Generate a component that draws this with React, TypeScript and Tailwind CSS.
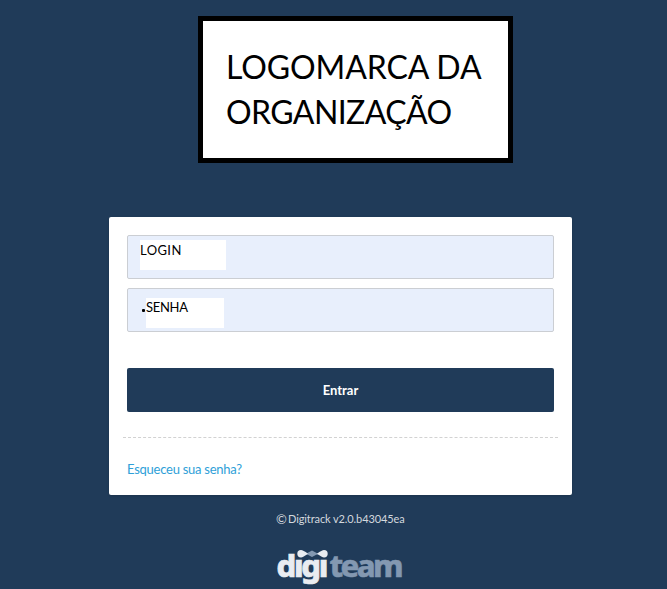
import React, { useState } from 'react';

function DigiteamLogo() {
  return (
    <svg width="160" height="47" viewBox="0 0 160 47" className="block" role="img" aria-label="digiteam">
      <text
        x="0.5"
        y="34.5"
        fontFamily='"Noto Sans", sans-serif'
        fontSize="31"
        textLength="52"
        lengthAdjust="spacing"
        fontWeight="800"
        stroke="#e9ecf1"
        strokeWidth="0.7"
        fill="#e9ecf1"
      >
        dıgı
      </text>
      <text
        x="53.5"
        y="34.5"
        fontFamily='"Noto Sans", sans-serif'
        fontSize="31"
        textLength="74"
        lengthAdjust="spacing"
        fontWeight="800"
        stroke="#8398b1"
        strokeWidth="0.5"
        fill="#8398b1"
      >
        team
      </text>
      {/* Linked dots over the two i letters */}
      <path d="M27 11.7 Q32 11.5 36 8.5 Q40 11.5 45 11.7 Q40 12 36 15 Q32 12 27 11.7 Z" fill="#8398b1" />
      <path d="M25 8 Q27 8 32 11.7 Q27 15.4 25 15.4 A3.7 3.7 0 0 1 25 8 Z" fill="#e9ecf1" />
      <path d="M48 8 Q46 8 41 11.7 Q46 15.4 48 15.4 A3.7 3.7 0 0 0 48 8 Z" fill="#e9ecf1" />
    </svg>
  );
}

export default function App() {
  const [isLoading, setIsLoading] = useState(false);

  // Handle form submit
  const handleSubmit = (e: React.FormEvent) => {
    e.preventDefault();
    setIsLoading(true);
    setTimeout(() => setIsLoading(false), 1000);
  };

  return (
    <div className="h-[589px] w-[667px] overflow-hidden bg-[#203b59] pt-4 font-['Lato',sans-serif]">
      {/* Organization logo */}
      <div className="ml-[198px] h-[147px] w-[315px] border-5 border-black bg-white pl-[23px] pt-[23px] text-[32px] leading-[45px] text-black">
        <div className="whitespace-nowrap tracking-[-0.1px]">LOGOMARCA DA</div>
        <div className="whitespace-nowrap tracking-[-0.6px]">ORGANIZAÇÃO</div>
      </div>

      {/* Login card */}
      <form
        onSubmit={handleSubmit}
        className="ml-[109px] mt-[54px] h-[278px] w-[463px] rounded-xs bg-white px-[18px] pt-[18px] shadow-sm"
      >
        <div className="h-11 rounded-xs border border-[#cbced3] bg-[#e8effc] pl-3 pt-1">
          <div className="h-[30px] w-[86px] bg-white text-[13px] leading-5 tracking-[0.4px] text-black">LOGIN</div>
        </div>
        <div className="mt-[9px] flex h-11 rounded-xs border border-[#cbced3] bg-[#e8effc] pl-[14px] pt-[9px]">
          <div className="mt-[11px] mr-px h-[3px] w-[3px] rounded-[1px] bg-black" />
          <div className="h-[30px] w-[78px] bg-white text-[13px] leading-[19px] tracking-[-0.3px] text-black">SENHA</div>
        </div>

        <button
          type="submit"
          disabled={isLoading}
          className="mt-9 block h-11 w-full rounded-xs bg-[#203b59] pt-0.5 text-[13px] font-bold text-white"
        >
          Entrar
        </button>

        <div className="-mx-1 mt-[25px] border-t border-dashed border-[#d2d2d2]" />
        <a href="#" className="mt-[21px] block text-[13px] leading-5 tracking-[-0.25px] text-[#2f9fd8]">
          Esqueceu sua senha?
        </a>
      </form>

      {/* Footer */}
      <div className="ml-[276px] mt-4 flex h-4 text-[11px] leading-4 text-[#d3d8de]">
        <span className="w-3 text-[13px] leading-4">©</span>
        <span className="whitespace-nowrap tracking-[-0.1px]">Digitrack v2.0.b43045ea</span>
      </div>
      <div className="ml-[276px] mt-[15px]">
        <DigiteamLogo />
      </div>
    </div>
  );
}
